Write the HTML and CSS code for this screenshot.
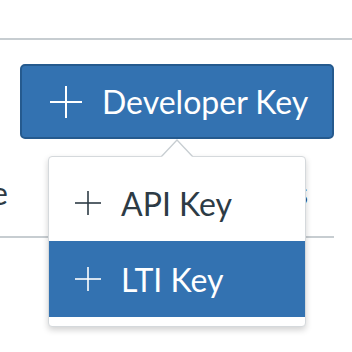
FILE: index.html
```html
<!DOCTYPE html>
<html lang="en">
<head>
  <meta charset="UTF-8">
  <title>Developer Keys</title>
  <link rel="stylesheet" href="styles.css">
</head>
<body>
  <div class="page">
    <div class="header"></div>

    <div class="actions">
      <button class="add-key">
        <svg class="plus" width="32" height="32" viewBox="0 0 32 32">
          <line x1="16" y1="0" x2="16" y2="32" />
          <line x1="0" y1="16" x2="32" y2="16" />
        </svg>
        <span>Developer Key</span>
      </button>
    </div>

    <!-- tab bar sits behind the menu -->
    <div class="tabs">
      <span class="tab tab-first">Inheritance</span>
      <span class="tab tab-second">Keys</span>
    </div>

    <ul class="key-menu">
      <li class="menu-item">
        <svg class="plus small" width="26" height="26" viewBox="0 0 26 26">
          <line x1="13" y1="1" x2="13" y2="25" />
          <line x1="0" y1="13" x2="26" y2="13" />
        </svg>
        <span>API Key</span>
      </li>
      <li class="menu-item active">
        <svg class="plus small" width="26" height="26" viewBox="0 0 26 26">
          <line x1="13" y1="1" x2="13" y2="25" />
          <line x1="0" y1="13" x2="26" y2="13" />
        </svg>
        <span>LTI Key</span>
      </li>
    </ul>
  </div>
</body>
</html>
```

FILE: styles.css
```css
* {
  margin: 0;
  padding: 0;
  box-sizing: border-box;
}

body {
  font-family: Lato, 'Open Sans', sans-serif;
  background: #fff;
  color: #2d3b45;
}

.page {
  position: relative;
  width: 352px;
  height: 352px;
  overflow: hidden;
}

.header {
  height: 40px;
  border-bottom: 2px solid #c7cdd1;
}

.actions {
  display: flex;
  justify-content: flex-end;
  padding: 24px 18px 0 0;
}

.add-key {
  display: flex;
  align-items: center;
  gap: 20px;
  width: 314px;
  height: 75px;
  padding: 0 0 0 28px;
  background: #3372b1;
  border: 2px solid #255a8e;
  border-radius: 5px;
  color: #fff;
  font-family: inherit;
  font-size: 32px;
  cursor: pointer;
}

.plus line {
  stroke: currentColor;
  stroke-width: 2;
}

.plus.small line {
  stroke-width: 1.6;
}

.tabs {
  display: flex;
  height: 99px;
  border-bottom: 2px solid #c7cdd1;
  width: 334px;
  font-size: 32px;
  align-items: center;
  padding-top: 10px;
}

.tab {
  white-space: nowrap;
}

.tab-first {
  margin-left: -150px;
}

.tab-second {
  margin-left: auto;
  margin-right: 26px;
}

.key-menu {
  position: absolute;
  left: 48px;
  top: 156px;
  width: 258px;
  list-style: none;
  padding: 8px 0 9px;
  background: #fff;
  border: 1px solid #d5d9dc;
  border-radius: 4px;
  box-shadow: 0 3px 6px rgba(0, 0, 0, 0.18);
}

.key-menu::before,
.key-menu::after {
  content: "";
  position: absolute;
  left: 112px;
  border-left: 16px solid transparent;
  border-right: 16px solid transparent;
}

.key-menu::before {
  top: -18px;
  border-bottom: 17px solid #c7cdd1;
}

.key-menu::after {
  top: -16px;
  border-bottom: 17px solid #fff;
}

.menu-item {
  display: flex;
  align-items: center;
  gap: 20px;
  height: 76px;
  padding-left: 26px;
  font-size: 32px;
  color: #2d3b45;
}

.menu-item.active {
  background: #3372b1;
  color: #fff;
}
```
